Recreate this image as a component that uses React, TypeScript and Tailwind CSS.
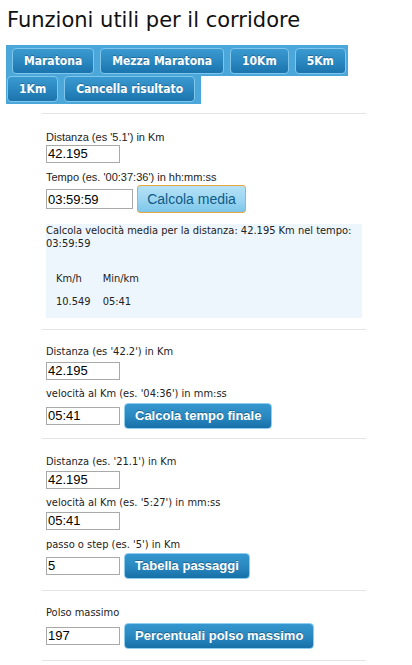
import React from "react";

const tahoma = "font-['DejaVu_Sans_Condensed','DejaVu_Sans',sans-serif] font-stretch-condensed";
const segoe = "font-['Liberation_Sans',Arial,sans-serif]";

const topButtons = [
  ["Maratona", "Mezza Maratona", "10Km", "5Km"],
  ["1Km", "Cancella risultato"],
];

const BarButton = ({ label }: { label: string }) => (
  <button
    className={`h-[26px] rounded-[4px] border border-[#7fc6ec] bg-gradient-to-b from-[#3a9ad0] via-[#2b88c0] to-[#1b74ad] px-[11px] text-[12px] font-bold text-white [text-shadow:0_-1px_0_rgba(0,0,0,0.25)] ${tahoma}`}
  >
    {label}
  </button>
);

const BlueButton = ({ label }: { label: string }) => (
  <button
    className={`h-[26px] rounded-[4px] border border-[#8ccdf0] bg-gradient-to-b from-[#3597cf] via-[#2a89c1] to-[#1770a8] px-[10px] text-[13px] font-bold text-white [text-shadow:0_-1px_0_rgba(0,0,0,0.3)] ${segoe}`}
  >
    {label}
  </button>
);

const Field = ({ value, w = "w-[74px] h-[18px]" }: { value: string; w?: string }) => (
  <input
    readOnly
    value={value}
    className={`block ${w} border border-[#a9a9a9] bg-white px-[1px] text-[13px] text-black outline-none ${segoe}`}
  />
);

const Label = ({ text, mt, seg }: { text: string; mt: string; seg?: boolean }) => (
  <div className={`${mt} text-[11px] leading-[14px] text-[#222] ${seg ? segoe : tahoma}`}>{text}</div>
);

export default function App() {
  return (
    <div className="min-h-[665px] bg-white pt-[7px]">
      <h2 className="pl-[7px] text-[21px] leading-[26px] text-[#111] font-['DejaVu_Sans',sans-serif]">
        Funzioni utili per il corridore
      </h2>

      <div className="mt-[12px] ml-[6px] flex flex-col items-start">
        {topButtons.map((row, i) => (
          <div
            key={i}
            className={`flex gap-[6px] bg-[#4ba6d9] pb-[2px] ${i === 0 ? "pl-[6px] pr-[2px] pt-[3px]" : "pl-px pr-[6px]"}`}
          >
            {row.map((b) => (
              <BarButton key={b} label={b} />
            ))}
          </div>
        ))}
      </div>

      <div className="ml-[42px] mt-[9px] w-[324px]">
        {/* velocità media */}
        <div className="border-t border-[#e5e5e5] pl-[4px] pt-[16px] pb-[11px]">
          <Label text="Distanza (es '5.1') in Km" mt="mt-0" seg />
          <div className="mt-px">
            <Field value="42.195" />
          </div>
          <Label text="Tempo (es. '00:37:36') in hh:mm:ss" mt="mt-[7px]" seg />
          <div className="mt-px flex items-center gap-[4px]">
            <Field value="03:59:59" w="w-[87px] h-[20px]" />
            <button
              className={`h-[28px] w-[109px] rounded-[3px] border border-[#e9a640] bg-gradient-to-b from-[#b5e2f7] via-[#9dd6f1] to-[#7cc6ea] text-[14px] text-[#0f5a86] ${segoe}`}
            >
              Calcola media
            </button>
          </div>
          <div className={`mt-[11px] h-[94px] w-[316px] bg-[#eef6fd] text-[11px] leading-[13px] text-[#222] ${tahoma}`}>
            <p>Calcola velocità media per la distanza: 42.195 Km nel tempo: 03:59:59</p>
            <table className="mt-[12px] ml-[6px] border-separate border-spacing-y-[10px]">
              <tbody>
                <tr>
                  <td className="pl-[4px] pr-[12px]">Km/h</td>
                  <td>Min/km</td>
                </tr>
                <tr>
                  <td className="pl-[4px] pr-[12px]">10.549</td>
                  <td>05:41</td>
                </tr>
              </tbody>
            </table>
          </div>
        </div>

        {/* tempo finale */}
        <div className="border-t border-[#e5e5e5] pl-[4px] pt-[15px] pb-[9px]">
          <Label text="Distanza (es '42.2') in Km" mt="mt-0" />
          <div className="mt-[3px]">
            <Field value="42.195" />
          </div>
          <Label text="velocità al Km (es. '04:36') in mm:ss" mt="mt-[7px]" />
          <div className="mt-[2px] flex items-center gap-[4px]">
            <Field value="05:41" />
            <BlueButton label="Calcola tempo finale" />
          </div>
        </div>

        {/* tabella passaggi */}
        <div className="border-t border-[#e5e5e5] pl-[4px] pt-[16px] pb-[11px]">
          <Label text="Distanza (es. '21.1') in Km" mt="mt-0" />
          <div className="mt-[2px]">
            <Field value="42.195" />
          </div>
          <Label text="velocità al Km (es. '5:27') in mm:ss" mt="mt-[7px]" />
          <div className="mt-[2px]">
            <Field value="05:41" />
          </div>
          <Label text="passo o step (es. '5') in Km" mt="mt-[8px]" />
          <div className="mt-px flex items-center gap-[4px]">
            <Field value="5" />
            <BlueButton label="Tabella passaggi" />
          </div>
        </div>

        {/* polso */}
        <div className="border-t border-[#e5e5e5] pl-[4px] pt-[15px] pb-[11px]">
          <Label text="Polso massimo" mt="mt-0" />
          <div className="mt-[3px] flex items-center gap-[4px]">
            <Field value="197" />
            <BlueButton label="Percentuali polso massimo" />
          </div>
        </div>
        <div className="border-t border-[#e5e5e5]" />
      </div>
    </div>
  );
}
